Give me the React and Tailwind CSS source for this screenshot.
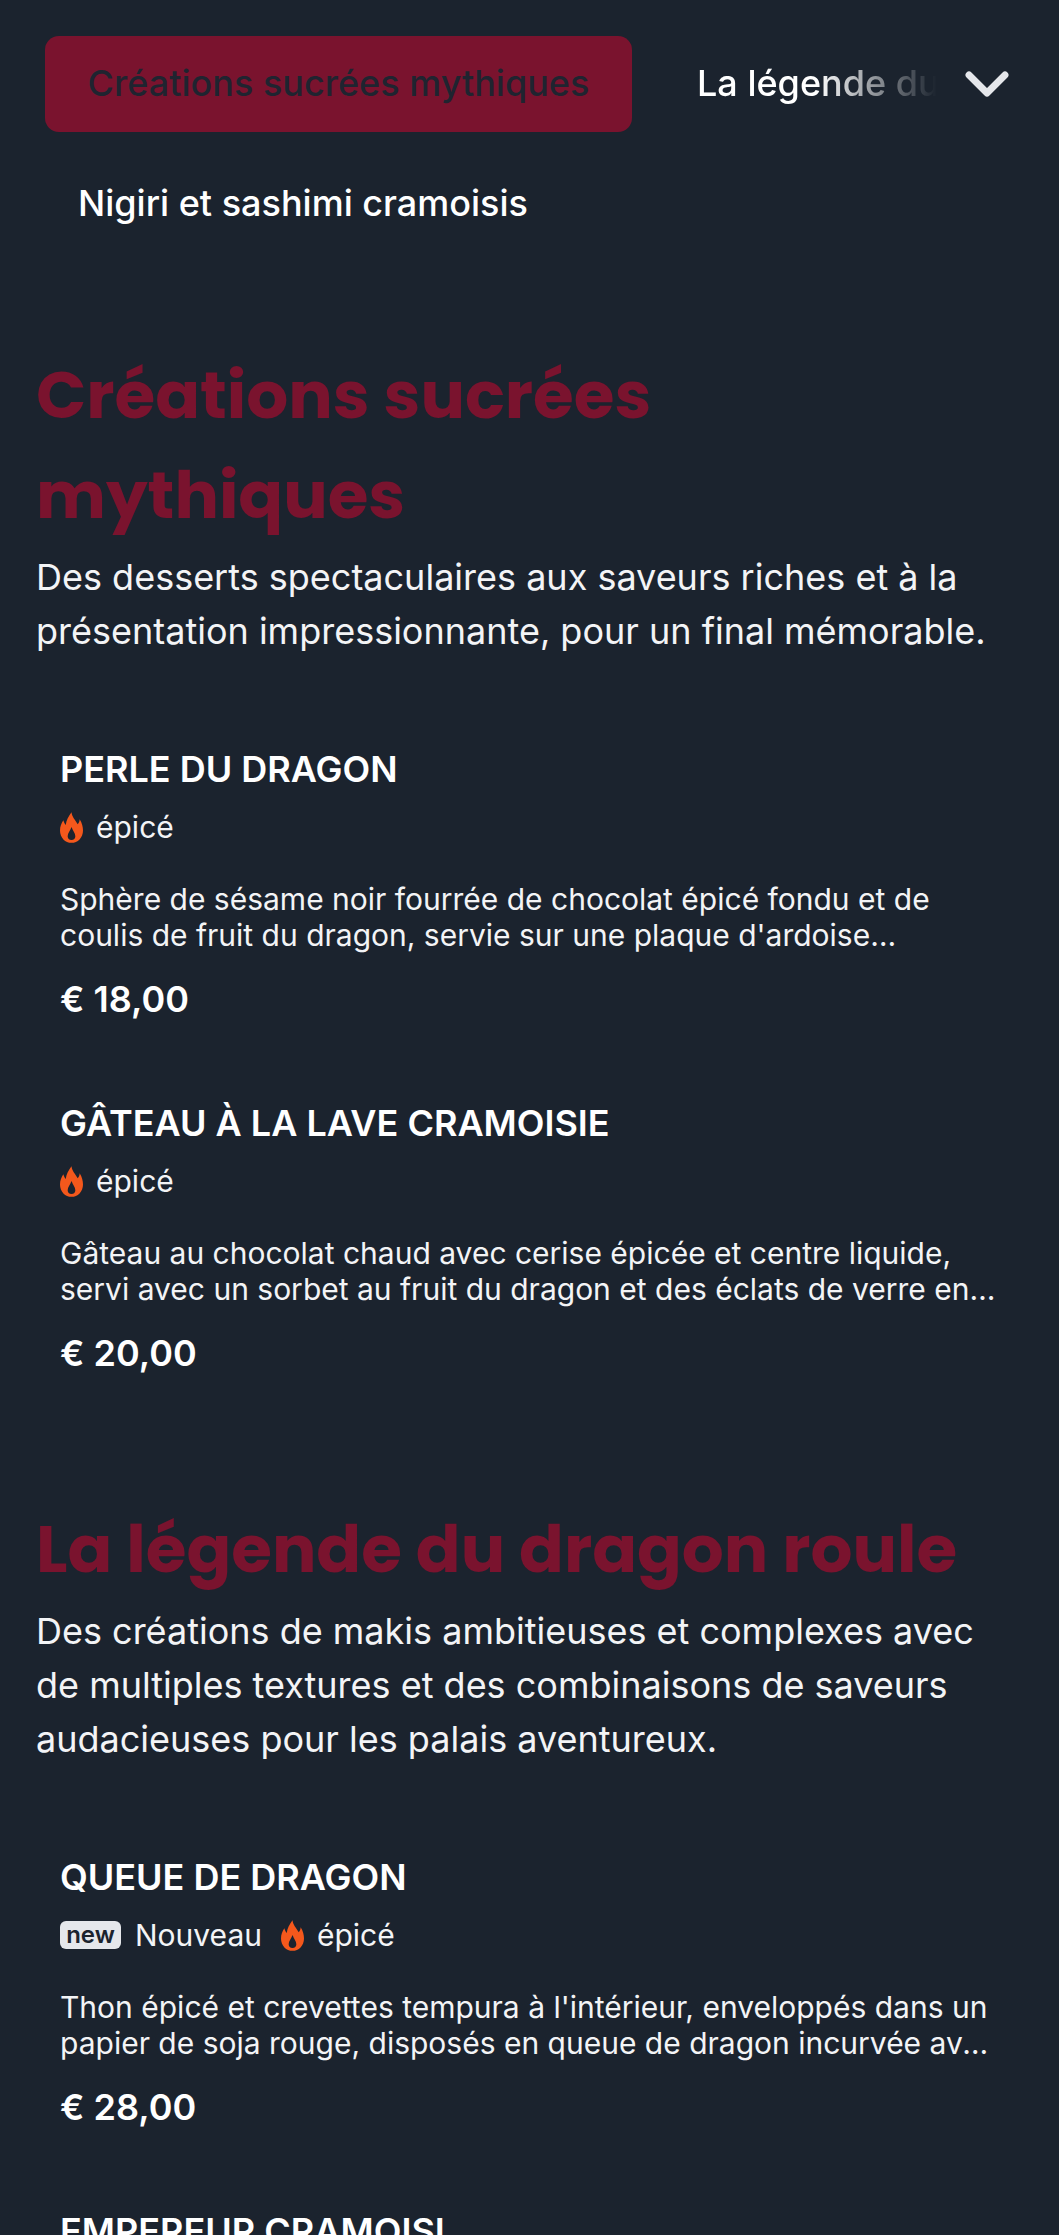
import { ChevronDown } from "lucide-react";

const sections = [
  {
    title: "Créations sucrées mythiques",
    text: "Des desserts spectaculaires aux saveurs riches et à la présentation impressionnante, pour un final mémorable.",
    items: [
      {
        name: "PERLE DU DRAGON",
        desc: "Sphère de sésame noir fourrée de chocolat épicé fondu et de coulis de fruit du dragon, servie sur une plaque d'ardoise incandescente avec des feuilles d'or.",
        price: "€ 18,00",
      },
      {
        name: "GÂTEAU À LA LAVE CRAMOISIE",
        desc: "Gâteau au chocolat chaud avec cerise épicée et centre liquide, servi avec un sorbet au fruit du dragon et des éclats de verre en sucre rouge.",
        price: "€ 20,00",
      },
    ],
  },
  {
    title: "La légende du dragon roule",
    text: "Des créations de makis ambitieuses et complexes avec de multiples textures et des combinaisons de saveurs audacieuses pour les palais aventureux.",
    items: [
      {
        name: "QUEUE DE DRAGON",
        isNew: true,
        desc: "Thon épicé et crevettes tempura à l'intérieur, enveloppés dans un papier de soja rouge, disposés en queue de dragon incurvée avec une sauce piquante.",
        price: "€ 28,00",
      },
      {
        name: "EMPEREUR CRAMOISI",
        desc: "Anguille grillée et avocat, recouverts de thon rouge et de sauce sriracha.",
        price: "€ 32,00",
      },
    ],
  },
];

function Flame() {
  return (
    <svg viewBox="0 0 24 32" className="mr-[13px] h-[31px] w-[23px] shrink-0" fill="#f4581c" fillRule="evenodd">
      <path d="M12 0C12.5 5 16 8 18.5 12.5C20 11 20.5 9.5 20.5 7.5C23 11.5 24 15.5 24 19C24 26.5 18.5 32 12 32C5.5 32 0 26.5 0 19C0 15 1.5 11.5 3.5 8.5C4 10.5 4.8 12 6 13.5C6.5 8 9 4 12 0ZM12 29C14.5 29 16 27.5 16 25C16 22 13.5 19.5 12 15.5C10.5 19.5 8 22 8 25C8 27.5 9.5 29 12 29Z" />
    </svg>
  );
}

function MenuItem({ item }) {
  return (
    <div className="px-[24px] pt-[24px] pb-[56px]">
      <h3 className="text-[36px] leading-[44px] font-semibold text-white">{item.name}</h3>
      <div className="mt-[14px] flex items-center h-[44px] text-[30px] text-[#f3f4f6]">
        {item.isNew && (
          <>
            <span className="mr-[14px] flex h-[28px] w-[61px] items-center justify-center rounded-[6px] bg-[#e5e7eb] text-[24px] font-semibold leading-none text-[#1b232e]">
              new
            </span>
            <span className="mr-[19px]">Nouveau</span>
          </>
        )}
        <Flame />
        <span>épicé</span>
      </div>
      <p className="mt-[32px] line-clamp-2 text-[30px] leading-[36px] text-[#f3f4f6]">{item.desc}</p>
      <p className="mt-[24px] text-[36px] leading-[44px] font-semibold text-white">{item.price}</p>
    </div>
  );
}

export default function App() {
  return (
    <div className="h-screen overflow-hidden bg-[#1b232e] font-['Inter',sans-serif] text-white">
      {/* Onglets */}
      <nav className="pl-[45px] pt-[36px] pb-[25px]">
        <div className="flex items-center">
          <button className="h-[96px] w-[587px] shrink-0 rounded-[14px] bg-[#7a132e] pb-[2px] text-[36px] font-medium text-[#1f2430]">
            Créations sucrées mythiques
          </button>
          <span className="ml-[65px] w-[240px] shrink-0 overflow-hidden whitespace-nowrap pb-[2px] text-[36px] font-medium [mask-image:linear-gradient(to_right,black_50%,transparent_100%)]">
            La légende du dragon roule
          </span>
          <ChevronDown className="ml-[14px] shrink-0 text-[#e5e7eb]" size={72} strokeWidth={2.3} />
        </div>
        <div className="mt-[24px] flex h-[96px] items-center pb-[2px] pl-[33px] text-[36px] font-medium">Nigiri et sashimi cramoisis</div>
      </nav>

      {sections.map((s) => (
        <section key={s.title} className="px-[36px] pt-[68px]">
          <h2 className="font-['Poppins','Lato',sans-serif] text-[66px] leading-[100px] font-bold text-[#7a132e]">{s.title}</h2>
          <p className="mt-[5px] text-[36px] leading-[54px] text-[#f3f4f6]">{s.text}</p>
          <div className="mt-[65px]">
            {s.items.map((item) => (
              <MenuItem key={item.name} item={item} />
            ))}
          </div>
        </section>
      ))}
    </div>
  );
}
